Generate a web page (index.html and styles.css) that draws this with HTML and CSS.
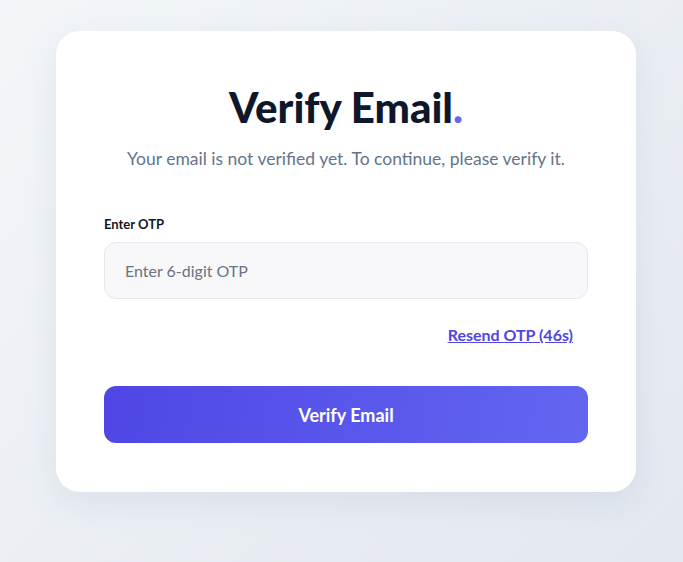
FILE: index.html
```html
<!DOCTYPE html>
<html lang="en">
<head>
    <meta charset="UTF-8">
    <meta name="viewport" content="width=device-width, initial-scale=1.0">
    <title>Verify Email</title>
    <link rel="stylesheet" href="styles.css">
</head>
<body>
    <div class="page">
        <div class="card">
            <h1 class="title">Verify Email<span class="dot">.</span></h1>
            <p class="subtitle">Your email is not verified yet. To continue, please verify it.</p>

            <form class="otp-form" onsubmit="return false;">
                <label class="field-label" for="otp">Enter OTP</label>
                <input class="otp-input" type="text" id="otp" placeholder="Enter 6-digit OTP" maxlength="6">

                <div class="resend-row">
                    <a href="#" class="resend-link" id="resend">Resend OTP (46s)</a>
                </div>

                <button type="submit" class="verify-btn">Verify Email</button>
            </form>
        </div>
    </div>
</body>
</html>
```

FILE: styles.css
```css
* {
    box-sizing: border-box;
}

body {
    margin: 0;
    padding: 0;
    font-family: Lato, "Open Sans", sans-serif;
    background: linear-gradient(135deg, #f3f6f9 0%, #e3e8ef 100%);
    min-height: 100vh;
}

.page {
    display: flex;
    justify-content: center;
    padding: 31px 0 70px 9px;
}

.card {
    width: 580px;
    background-color: #fff;
    border-radius: 24px;
    padding: 48px 48px 49px;
    box-shadow: 0 10px 30px rgba(148, 163, 184, 0.18);
}

.title {
    margin: 0;
    text-align: center;
    font-size: 42px;
    font-weight: 900;
    line-height: 56px;
    color: #0f172a;
}

.dot {
    color: #6366f1;
}

.subtitle {
    margin: 12px 0 0;
    text-align: center;
    font-size: 17.5px;
    line-height: 24px;
    color: #64748b;
}

.otp-form {
    display: flex;
    flex-direction: column;
    margin-top: 44px;
}

.field-label {
    font-size: 13px;
    font-weight: 700;
    color: #111827;
    line-height: 18px;
    margin-bottom: 9px;
}

.otp-input {
    height: 57px;
    padding: 0 20px;
    font-family: inherit;
    font-size: 16px;
    color: #0f172a;
    background-color: #f8f8fa;
    border: 1px solid #e2e8f0;
    border-radius: 12px;
    outline: none;
}

.otp-input::placeholder {
    color: #6b7280;
}

.resend-row {
    display: flex;
    justify-content: flex-end;
    padding: 0 15px 0 0;
    margin-top: 25px;
}

.resend-link {
    font-size: 16px;
    font-weight: 700;
    color: #4f46e5;
    line-height: 22px;
    text-decoration: underline;
}

.verify-btn {
    margin-top: 40px;
    height: 57px;
    border: none;
    border-radius: 12px;
    background: linear-gradient(100deg, #4f46e5 0%, #6366f1 100%);
    color: #fff;
    font-family: inherit;
    font-size: 18px;
    font-weight: 700;
    cursor: pointer;
}
```
